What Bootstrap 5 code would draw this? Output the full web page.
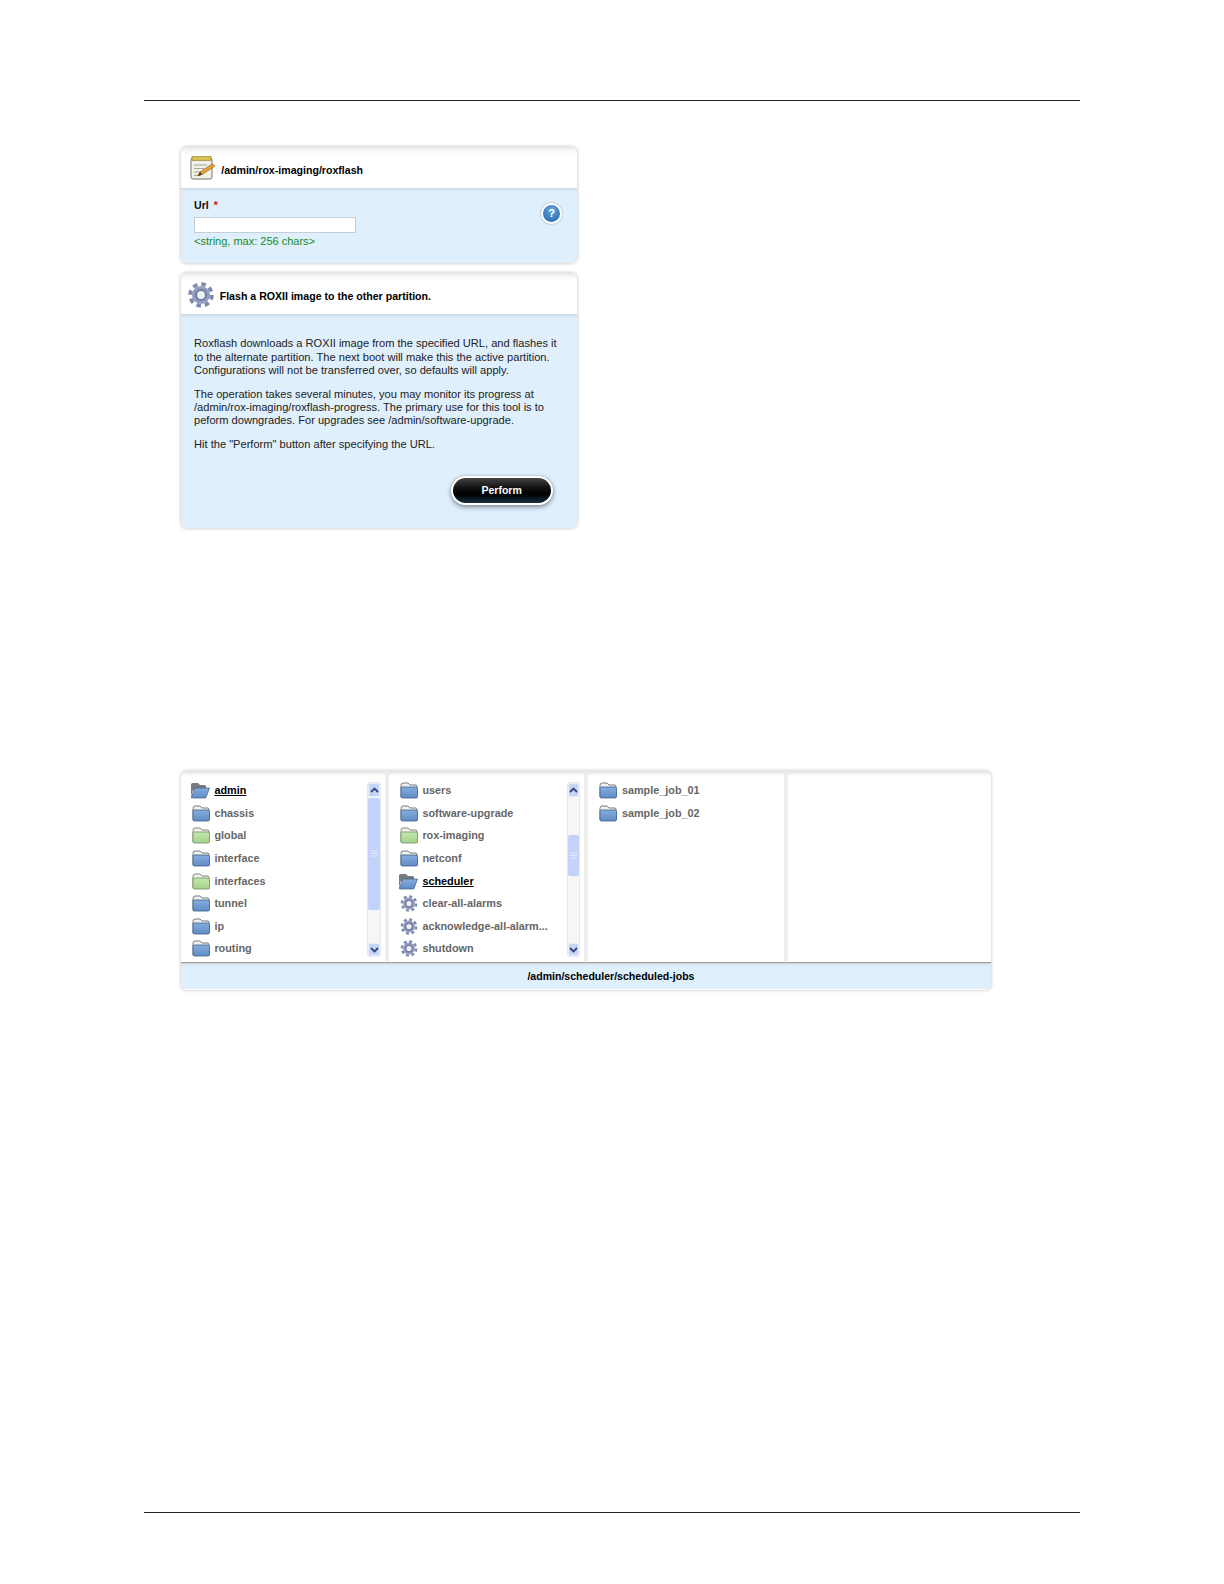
<!DOCTYPE html>
<html lang="en">
<head>
<meta charset="utf-8">
<title>roxflash</title>
<link rel="stylesheet" href="https://cdn.jsdelivr.net/npm/bootstrap@5.3.0/dist/css/bootstrap.min.css">
<style>
html,body{background:#fff;margin:0}
body{font-family:"Liberation Sans",Arial,sans-serif;font-size:11px;line-height:13px;color:#111}
.sheet{width:936px;height:1584px;margin-left:144px;padding-top:100px;padding-bottom:71px}
.rule{height:1px;background:#222;flex:none}
.panel-box{width:396.500px;margin-left:36.700px;border-radius:6px;box-shadow:0 0 3px 1px #d4d4d4;background:#fff;overflow:hidden;flex:none}
.first-box{margin-top:45.500px;height:116.500px}
.second-box{margin-top:10px;height:255px}
.box-head{background:linear-gradient(#e8e8e8 0,#f8f8f8 4px,#fff 9px);font-weight:700;font-size:10.600px;color:#000}
.head-one{height:41px;padding-left:9px;gap:5.500px}
.head-two{height:41px;padding-left:7px;gap:6px}
.box-head span{padding-top:6px}
.box-head svg{margin-top:2px}
.box-body{background:linear-gradient(#ccd8e2 0,#dcebf7 3px,#dfeffc 7px);padding-left:13.300px;padding-right:17px}
.body-one{height:75.500px;padding-top:11px}
.body-two{height:214px;padding-top:23.300px;color:#222;font-size:11.100px;line-height:13.300px;white-space:nowrap}
.body-two p{margin:0 0 10.500px}
.fld-label{font-weight:700;color:#111;font-size:10.600px}
.req{color:#d11;margin-left:2px}
.url-field{display:block;width:162px;height:16.500px;margin-top:5px;background:#fff;border:1px solid #c4ced6;padding:0}
.hint-text{color:#1a8a2a;font-size:11px;margin-top:1.500px}
.help-dot{width:21px;height:21px;margin-top:4.500px;margin-right:-2px;border-radius:50%;background:radial-gradient(circle at 50% 30%,#6aa5da,#1c62a8);border:2px solid #fff;box-shadow:0 0 2px #789;color:#fff;font-weight:700;font-size:11px}
.go-wrap{margin-top:25px;padding-right:7.600px}
.go-btn{width:102px;height:29px;border-radius:15px;border:2px solid #fff;background:linear-gradient(#444,#111 40%,#000 65%,#163040 100%);color:#fff;font-weight:700;font-size:10.500px;box-shadow:0 2px 5px #7d8a95,0 0 1px #555;padding:0}
.go-btn:hover{background:#000;color:#fff}
.browser-box{width:810.500px;margin-left:36.700px;margin-top:243px;height:218.500px;border-radius:6px;box-shadow:0 0 3px 1px #d8d8d8;overflow:hidden;background:#fff;flex:none}
.fb-cols{height:190.700px;box-shadow:inset 0 5px 4px -3px #ddd}
.fb-col{padding:8.700px 4.300px 0 11px;border-right:4px solid #ededed;height:190px}
.w-a{width:208.500px}.w-b{width:198.500px;padding-right:3.300px;padding-left:10.500px}.w-c{width:200px;padding-left:11.500px}.w-d{width:203.500px;border-right:0}
.fb-list{list-style:none;margin:0;padding:0}
.fb-list li{height:22.520px;gap:4.700px;color:#666;font-weight:700;font-size:10.850px;white-space:nowrap}
.fb-list li.on{color:#000;text-decoration:underline}
.fb-ico{width:18px;height:17px;flex:none}
.open-ico{width:20px;margin-left:-2px}
.fb-scroll{width:13.500px;height:175.200px;margin-top:2.500px;background:#f6f6f6;border:1px solid #e8e8ee;border-radius:2px}
.sc-btn{height:13.500px;background:#c5d5f6;border:1px solid #e8effa;border-radius:2px;flex:none}
.sc-thumb{background:#c3d2f8;border-radius:2px}
.th-a{height:112px;margin-top:1px}
.th-b{height:41px;margin-top:38px}
.sc-fill{flex:1}
.fb-foot{height:27.800px;padding-left:50px;background:#dfeffc;border-top:1px solid #9a9a9a;box-shadow:inset 0 3px 3px -2px #c4cfd8;font-weight:700;font-size:10.550px;color:#000}
</style>
</head>
<body>
<svg width="0" height="0" class="d-block" aria-hidden="true">
<defs>
<linearGradient id="g-blue" x1="0" y1="0" x2="0" y2="1"><stop offset="0" stop-color="#86aede"/><stop offset="1" stop-color="#5f8cc6"/></linearGradient>
<linearGradient id="g-green" x1="0" y1="0" x2="0" y2="1"><stop offset="0" stop-color="#c6e8ae"/><stop offset="1" stop-color="#a2d288"/></linearGradient>
<symbol id="f-blue" viewBox="0 0 18 17"><path d="M1 3.500Q1 1 3 1H8L10 3H16Q17 3 17 5V15H1Z" fill="#eef0f2" stroke="#777c82"/><path d="M1.500 5H16Q17.500 5 17.500 6.500V14.500Q17.500 16 16 16H2.500Q1 16 1 14.500V5.500Z" fill="url(#g-blue)" stroke="#3f5f85" stroke-width=".8"/></symbol>
<symbol id="f-green" viewBox="0 0 18 17"><path d="M1 3.500Q1 1 3 1H8L10 3H16Q17 3 17 5V15H1Z" fill="#eef0f2" stroke="#85887f"/><path d="M1.500 5H16Q17.500 5 17.500 6.500V14.500Q17.500 16 16 16H2.500Q1 16 1 14.500V5.500Z" fill="url(#g-green)" stroke="#6f8f60" stroke-width=".8"/></symbol>
<symbol id="f-open" viewBox="0 0 20 17"><path d="M1 2.500Q1 1 3 1H8L10 3H15Q16 3 16 5V8H3L1 14Z" fill="#777a7e"/><path d="M5 6H19.500L16 15.500Q15.800 16 15 16H2Q1 16 1.300 15Z" fill="url(#g-blue)" stroke="#3f5f85" stroke-width=".7"/></symbol>
<symbol id="gear" viewBox="0 0 24 24"><circle cx="12" cy="12" r="10" fill="none" stroke="#7f89ad" stroke-width="3.600" stroke-dasharray="4.200 3.650"/><circle cx="12" cy="12" r="8.300" fill="#939dc2"/><circle cx="12" cy="12" r="5.600" fill="#747fa2"/><circle cx="12" cy="12" r="3.600" fill="#eef0f6"/></symbol>
</defs>
</svg>
<div class="sheet d-flex flex-column">
<div class="rule"></div>

<section class="panel-box first-box">
<div class="box-head head-one d-flex align-items-center">
<svg width="26" height="26" viewBox="0 0 26 26"><rect x="1" y="3" width="21" height="21" rx="2" fill="#f3f1e6" stroke="#77766c"/><rect x="2" y="1.500" width="19" height="4" fill="#d9c34f" stroke="#85793a" stroke-width=".6"/><path d="M4 10H17M4 13.500H14M4 17H11M4 20.500H9" stroke="#a5a598"/><path d="M8 21L10 17 22 9 25 11 13 19Z" fill="#e8a132" stroke="#8a5a1a" stroke-width=".6"/><path d="M8 21L10 17 12 19.500Z" fill="#3a2a12"/></svg>
<span>/admin/rox-imaging/roxflash</span>
</div>
<div class="box-body body-one d-flex justify-content-between align-items-start">
<div>
<div class="fld-label">Url <span class="req">*</span></div>
<input class="url-field" type="text" aria-label="Url">
<div class="hint-text">&lt;string, max: 256 chars&gt;</div>
</div>
<div class="help-dot d-flex align-items-center justify-content-center">?</div>
</div>
</section>

<section class="panel-box second-box">
<div class="box-head head-two d-flex align-items-center">
<svg width="26" height="26"><use href="#gear"/></svg>
<span>Flash a ROXII image to the other partition.</span>
</div>
<div class="box-body body-two">
<p>Roxflash downloads a ROXII image from the specified URL, and flashes it<br>to the alternate partition. The next boot will make this the active partition.<br>Configurations will not be transferred over, so defaults will apply.</p>
<p>The operation takes several minutes, you may monitor its progress at<br>/admin/rox-imaging/roxflash-progress. The primary use for this tool is to<br>peform downgrades. For upgrades see /admin/software-upgrade.</p>
<p>Hit the "Perform" button after specifying the URL.</p>
<div class="go-wrap d-flex justify-content-end"><button type="button" class="btn go-btn">Perform</button></div>
</div>
</section>

<section class="browser-box">
<div class="fb-cols d-flex">
<div class="fb-col w-a d-flex justify-content-between">
<ul class="fb-list">
<li class="d-flex align-items-center on"><svg class="fb-ico open-ico"><use href="#f-open"/></svg>admin</li>
<li class="d-flex align-items-center"><svg class="fb-ico"><use href="#f-blue"/></svg>chassis</li>
<li class="d-flex align-items-center"><svg class="fb-ico"><use href="#f-green"/></svg>global</li>
<li class="d-flex align-items-center"><svg class="fb-ico"><use href="#f-blue"/></svg>interface</li>
<li class="d-flex align-items-center"><svg class="fb-ico"><use href="#f-green"/></svg>interfaces</li>
<li class="d-flex align-items-center"><svg class="fb-ico"><use href="#f-blue"/></svg>tunnel</li>
<li class="d-flex align-items-center"><svg class="fb-ico"><use href="#f-blue"/></svg>ip</li>
<li class="d-flex align-items-center"><svg class="fb-ico"><use href="#f-blue"/></svg>routing</li>
</ul>
<div class="fb-scroll d-flex flex-column">
<div class="sc-btn d-flex align-items-center justify-content-center"><svg width="9" height="6" viewBox="0 0 9 6"><path d="M1 5L4.500 1.500 8 5" fill="none" stroke="#2f4a80" stroke-width="1.800"/></svg></div>
<div class="sc-thumb th-a d-flex align-items-center justify-content-center"><svg width="7" height="7" viewBox="0 0 7 7"><path d="M0 1H7M0 3.500H7M0 6H7" stroke="#e4ebfb"/></svg></div><div class="sc-fill"></div>
<div class="sc-btn d-flex align-items-center justify-content-center"><svg width="9" height="6" viewBox="0 0 9 6"><path d="M1 1L4.500 4.500 8 1" fill="none" stroke="#2f4a80" stroke-width="1.800"/></svg></div>
</div>
</div>
<div class="fb-col w-b d-flex justify-content-between">
<ul class="fb-list">
<li class="d-flex align-items-center"><svg class="fb-ico"><use href="#f-blue"/></svg>users</li>
<li class="d-flex align-items-center"><svg class="fb-ico"><use href="#f-blue"/></svg>software-upgrade</li>
<li class="d-flex align-items-center"><svg class="fb-ico"><use href="#f-green"/></svg>rox-imaging</li>
<li class="d-flex align-items-center"><svg class="fb-ico"><use href="#f-blue"/></svg>netconf</li>
<li class="d-flex align-items-center on"><svg class="fb-ico open-ico"><use href="#f-open"/></svg>scheduler</li>
<li class="d-flex align-items-center"><svg class="fb-ico"><use href="#gear"/></svg>clear-all-alarms</li>
<li class="d-flex align-items-center"><svg class="fb-ico"><use href="#gear"/></svg>acknowledge-all-alarm...</li>
<li class="d-flex align-items-center"><svg class="fb-ico"><use href="#gear"/></svg>shutdown</li>
</ul>
<div class="fb-scroll d-flex flex-column">
<div class="sc-btn d-flex align-items-center justify-content-center"><svg width="9" height="6" viewBox="0 0 9 6"><path d="M1 5L4.500 1.500 8 5" fill="none" stroke="#2f4a80" stroke-width="1.800"/></svg></div>
<div class="sc-thumb th-b d-flex align-items-center justify-content-center"><svg width="7" height="7" viewBox="0 0 7 7"><path d="M0 1H7M0 3.500H7M0 6H7" stroke="#e4ebfb"/></svg></div><div class="sc-fill"></div>
<div class="sc-btn d-flex align-items-center justify-content-center"><svg width="9" height="6" viewBox="0 0 9 6"><path d="M1 1L4.500 4.500 8 1" fill="none" stroke="#2f4a80" stroke-width="1.800"/></svg></div>
</div>
</div>
<div class="fb-col w-c">
<ul class="fb-list">
<li class="d-flex align-items-center"><svg class="fb-ico"><use href="#f-blue"/></svg>sample_job_01</li>
<li class="d-flex align-items-center"><svg class="fb-ico"><use href="#f-blue"/></svg>sample_job_02</li>
</ul>
</div>
<div class="fb-col w-d"></div>
</div>
<div class="fb-foot d-flex align-items-center justify-content-center">/admin/scheduler/scheduled-jobs</div>
</section>

<div class="rule mt-auto"></div>
</div>
<script src="https://cdn.jsdelivr.net/npm/bootstrap@5.3.0/dist/js/bootstrap.bundle.min.js"></script>
</body>
</html>
